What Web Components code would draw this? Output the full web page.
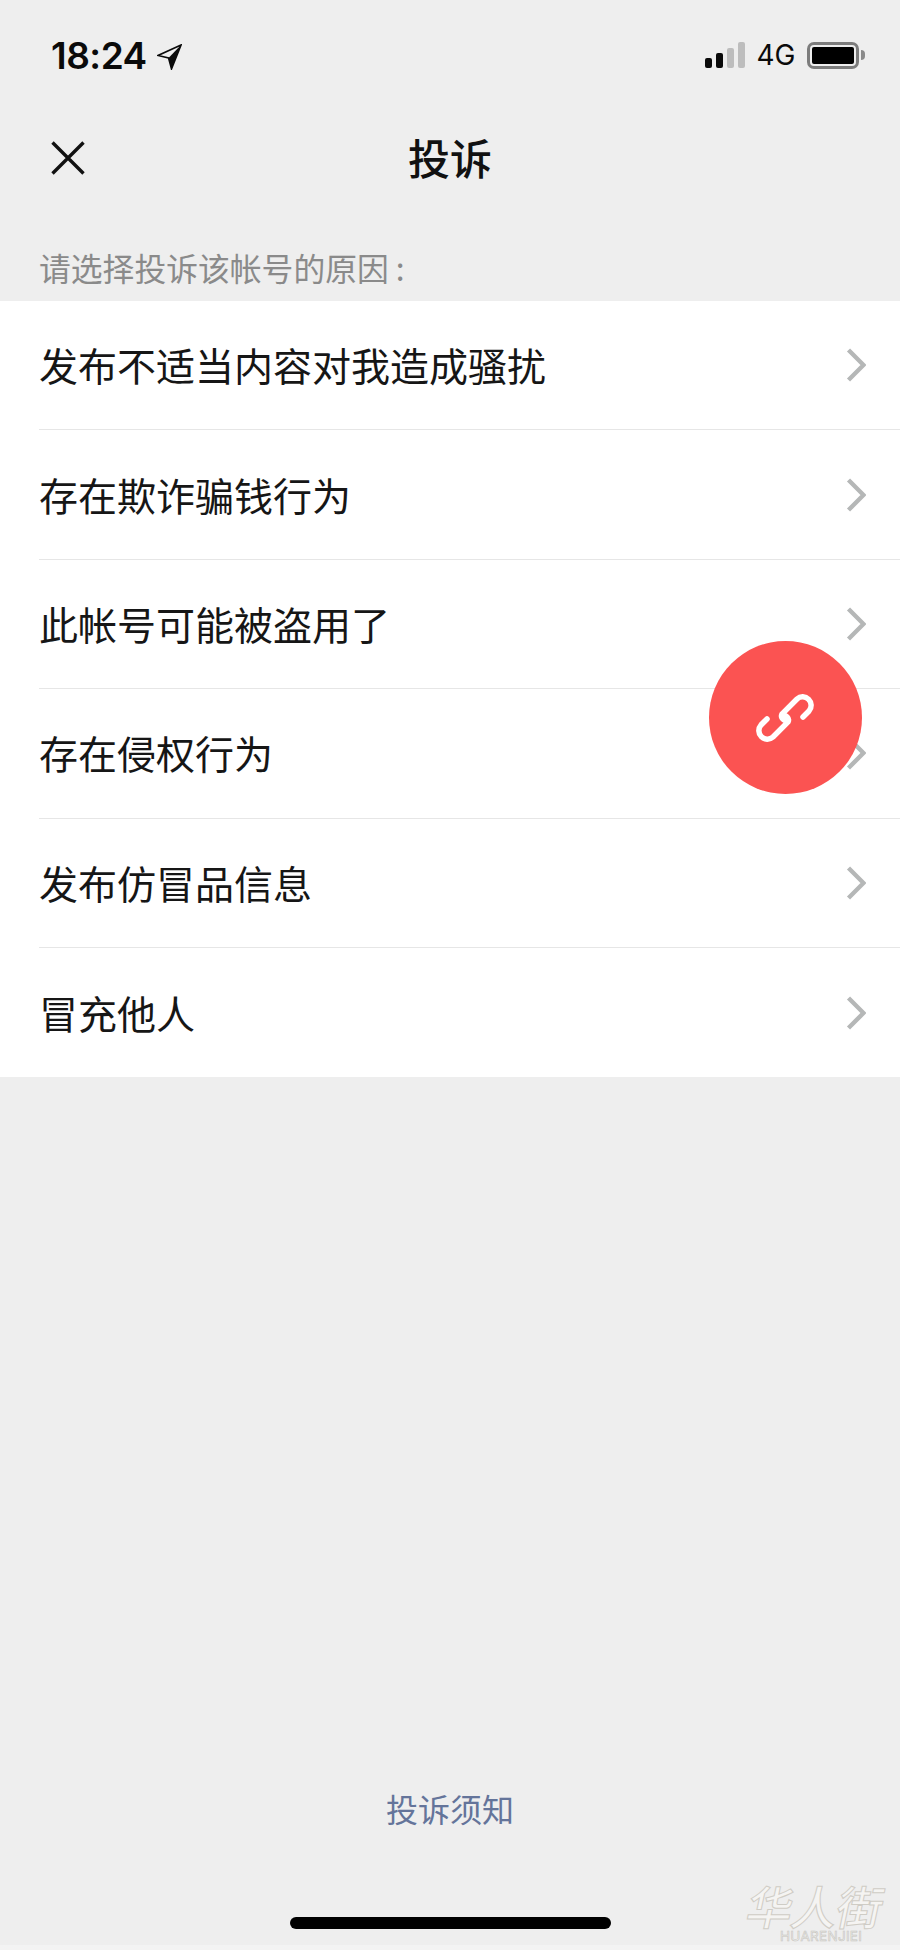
<!DOCTYPE html>
<html lang="zh-CN"><head><meta charset="utf-8"><title>投诉</title>
<style>
html,body{margin:0;padding:0;background:#eee;height:1950px;overflow:hidden;font-family:"Noto Sans CJK SC","Noto Sans",sans-serif}
</style></head><body>
<complaint-page>
  <status-bar slot="top"></status-bar>
  <nav-bar slot="top">投诉</nav-bar>
  <section-label slot="top">请选择投诉该帐号的原因<span style="margin-left:7px">:</span></section-label>
  <reason-list slot="top">
    <reason-row>发布不适当内容对我造成骚扰</reason-row>
    <reason-row>存在欺诈骗钱行为</reason-row>
    <reason-row>此帐号可能被盗用了</reason-row>
    <reason-row>存在侵权行为</reason-row>
    <reason-row>发布仿冒品信息</reason-row>
    <reason-row last>冒充他人</reason-row>
  </reason-list>
  <notice-link slot="bottom">投诉须知</notice-link>
  <home-indicator slot="bottom"></home-indicator>
  <link-fab slot="over"></link-fab>
  <site-watermark slot="over"></site-watermark>
</complaint-page>
<script>
function def(name, html){
  customElements.define(name, class extends HTMLElement{
    constructor(){super();const r=this.attachShadow({mode:'open'});r.innerHTML=html;}
  });
}
def('complaint-page',`<style>
:host{display:flex;flex-direction:column;position:relative;width:900px;height:1950px;background:#eee;overflow:hidden}
.top{display:block}.grow{flex:1}
.bottom{display:flex;flex-direction:column;align-items:center;border-bottom:5px solid #f3f3f3}
</style><div class="top"><slot name="top"></slot></div><div class="grow"></div><div class="bottom"><slot name="bottom"></slot></div><slot name="over"></slot>`);

def('status-bar',`<style>
:host{display:flex;align-items:center;height:110px;box-sizing:border-box;padding:0 35px 0 51px;color:#0a0a0a;font-family:Inter,"Liberation Sans",sans-serif}
.t{font-size:37px;font-weight:600;letter-spacing:-.5px;line-height:1;margin-top:0}
.arrow{margin-left:10px;margin-top:3px}
.sp{flex:1}
.sig{display:flex;align-items:flex-end;gap:4px;height:26px;margin-top:0}
.sig i{display:block;width:7px;border-radius:2px;background:#0a0a0a}
.sig i.off{background:#bdbdbd}
.g{font-size:28px;font-weight:400;margin:0 12px;line-height:1;letter-spacing:-.3px}
.bat{display:flex;align-items:center}
.shell{box-sizing:border-box;width:52px;height:27px;border:3px solid #7c7c7c;border-radius:7px;padding:2px}
.shell b{display:block;height:100%;background:#000;border-radius:2px}
.tip{width:4px;height:10px;background:#8a8a8a;border-radius:0 4px 4px 0;margin-left:2px}
</style><span class="t">18:24</span>
<svg class="arrow" width="25" height="26" viewBox="0 0 25 26"><path d="M24 1 1 11.500l10.500 2.400 3 11z" fill="none" stroke="#0a0a0a" stroke-width="1.600"/><path d="M24 1 11.500 13.900l3 11z" fill="#0a0a0a"/></svg>
<span class="sp"></span>
<span class="sig"><i style="height:10px"></i><i style="height:15px"></i><i class="off" style="height:20px"></i><i class="off" style="height:26px"></i></span>
<span class="g">4G</span>
<span class="bat"><span class="shell"><b></b></span><span class="tip"></span></span>`);

def('nav-bar',`<style>
:host{display:flex;align-items:center;justify-content:center;position:relative;height:116px;box-sizing:border-box;padding-bottom:20px;font-size:42px;font-weight:500;color:#111}
svg{position:absolute;left:51px;top:31px}
span{line-height:1;margin-top:-2px}
</style><svg width="34" height="34" viewBox="0 0 34 34"><path d="M1.500 1.500l31 31M32.500 1.500l-31 31" stroke="#111" stroke-width="3.400" fill="none"/></svg><span><slot></slot></span>`);

def('section-label',`<style>
:host{display:flex;align-items:center;height:75px;padding-left:39px;padding-top:9px;box-sizing:border-box;font-size:31.800px;color:#8a8a8a;line-height:1;white-space:nowrap}
</style><slot></slot>`);

def('reason-list',`<style>
:host{display:block;background:#fff}
</style><slot></slot>`);

def('reason-row',`<style>
:host{display:block;height:129.400px;padding-left:39px;box-sizing:border-box}
.in{display:flex;align-items:center;height:100%;box-sizing:border-box;padding-right:34px;border-bottom:1.400px solid #e6e6e6;font-size:39px;color:#161616;line-height:1;white-space:nowrap}
:host([last]) .in{border-bottom:0}
.l{flex:1;margin-top:-1px}
</style><div class="in"><span class="l"><slot></slot></span><svg width="20" height="34" viewBox="0 0 20 34"><path d="M2.500 2 17.500 17 2.500 32" fill="none" stroke="#b5b7b7" stroke-width="4.400"/></svg></div>`);

def('notice-link',`<style>
:host{display:block;font-size:32px;color:#64749a;line-height:1;margin-bottom:93px}
</style><slot></slot>`);

def('home-indicator',`<style>
:host{display:block;width:321px;height:12px;border-radius:6px;background:#000;margin-bottom:16px}
</style>`);

def('link-fab',`<style>
:host{position:absolute;left:708.500px;top:641px;width:153px;height:153px;border-radius:50%;background:#fb5352;display:flex;align-items:center;justify-content:center}
</style><svg width="60" height="60" viewBox="-30 -30 60 60" fill="none" stroke="#fff" stroke-width="5.500" stroke-linecap="round"><path d="M18-1 24-7A8.500 8.500 0 0 0 12-19L-3-4A4.500 4.500 0 0 0 3 2"/><path d="M-18 1-24 7A8.500 8.500 0 0 0-12 19L3 4A4.500 4.500 0 0 0-3-2"/></svg>`);

def('site-watermark',`<style>
:host{position:absolute;left:748px;top:1880px;width:142px;height:64px;color:#f5f4f2;pointer-events:none}
.cn{position:absolute;left:0;top:0;font-family:"Noto Sans CJK SC",sans-serif;font-size:46px;line-height:50px;white-space:nowrap;font-weight:500;-webkit-text-stroke:1px #cfccc5;letter-spacing:-1px;transform:skewX(-12deg)}
.en{position:absolute;left:32px;top:49px;font:13.500px/15px Inter,"Liberation Sans",sans-serif;color:#f4f4f2;-webkit-text-stroke:.6px #c6c4be;white-space:nowrap;letter-spacing:.3px}
</style><span class="cn">华人街</span><span class="en">HUARENJIEI</span>`);
</script>
</body></html>
